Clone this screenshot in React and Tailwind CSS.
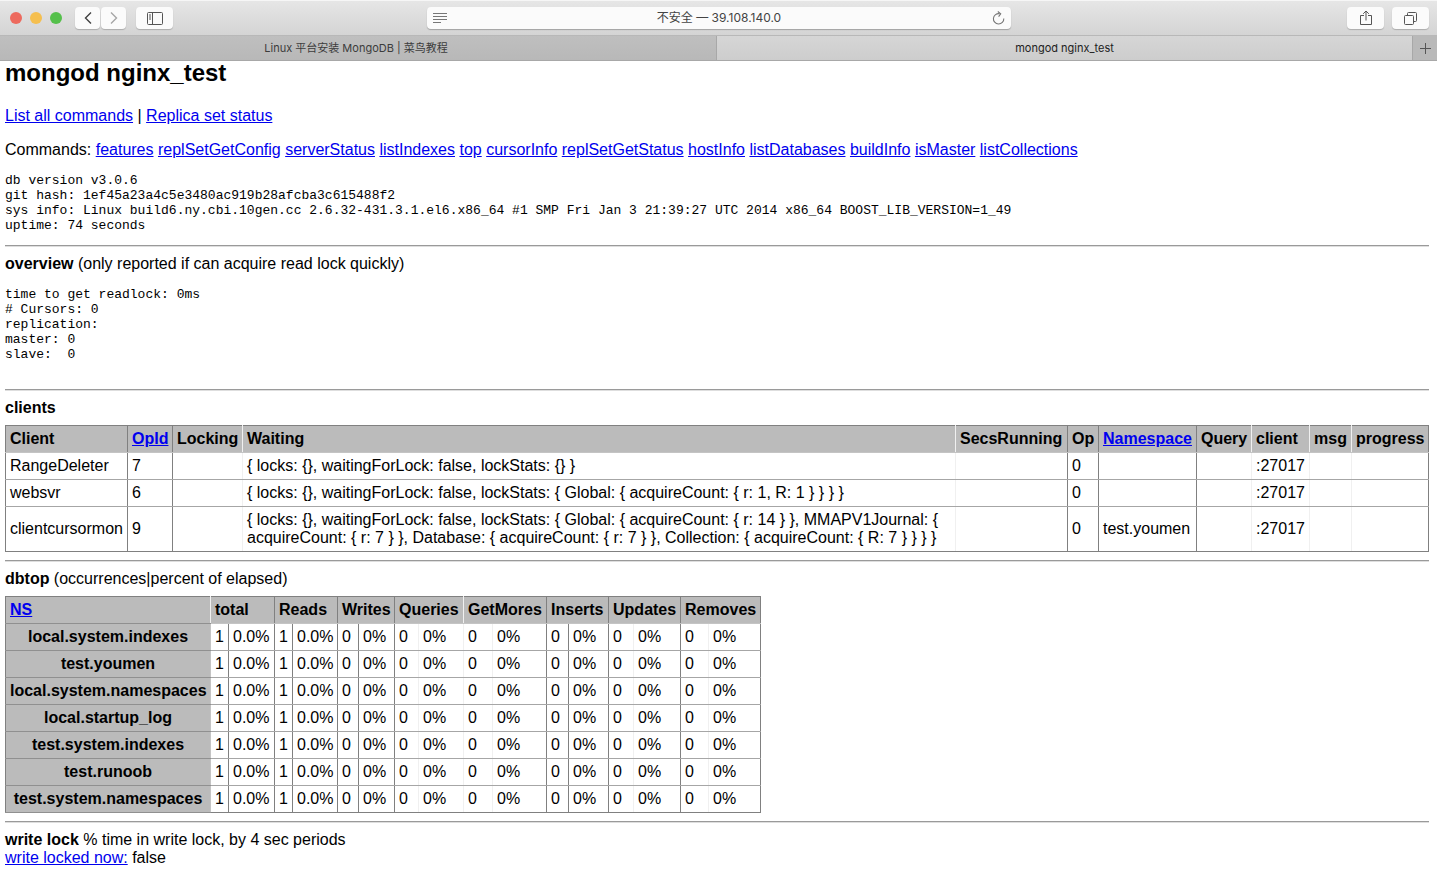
import React from "react";

const commands = [
  "features",
  "replSetGetConfig",
  "serverStatus",
  "listIndexes",
  "top",
  "cursorInfo",
  "replSetGetStatus",
  "hostInfo",
  "listDatabases",
  "buildInfo",
  "isMaster",
  "listCollections",
];

const serverInfo = `db version v3.0.6
git hash: 1ef45a23a4c5e3480ac919b28afcba3c615488f2
sys info: Linux build6.ny.cbi.10gen.cc 2.6.32-431.3.1.el6.x86_64 #1 SMP Fri Jan 3 21:39:27 UTC 2014 x86_64 BOOST_LIB_VERSION=1_49
uptime: 74 seconds`;

const overview = `time to get readlock: 0ms
# Cursors: 0
replication:
master: 0
slave:  0`;

const dark = "border-r-[#808080]";
const light = "border-r-[#f0f0f0]";

const clientColumns = [
  { name: "Client", width: "w-[122px]", edge: dark },
  { name: "OpId", width: "w-[45px]", edge: dark, link: true },
  { name: "Locking", width: "w-[70px]", edge: light },
  { name: "Waiting", width: "w-auto", edge: light },
  { name: "SecsRunning", width: "w-[112px]", edge: dark },
  { name: "Op", width: "w-[31px]", edge: dark },
  { name: "Namespace", width: "w-[98px]", edge: dark, link: true },
  { name: "Query", width: "w-[55px]", edge: light },
  { name: "client", width: "w-[58px]", edge: light },
  { name: "msg", width: "w-[42px]", edge: light },
  { name: "progress", width: "w-[77px]", edge: dark },
];

const clients = [
  ["RangeDeleter", "7", "", "{ locks: {}, waitingForLock: false, lockStats: {} }", "", "0", "", "", ":27017", "", ""],
  ["websvr", "6", "", "{ locks: {}, waitingForLock: false, lockStats: { Global: { acquireCount: { r: 1, R: 1 } } } }", "", "0", "", "", ":27017", "", ""],
  ["clientcursormon", "9", "", "{ locks: {}, waitingForLock: false, lockStats: { Global: { acquireCount: { r: 14 } }, MMAPV1Journal: { acquireCount: { r: 7 } }, Database: { acquireCount: { r: 7 } }, Collection: { acquireCount: { R: 7 } } } }", "", "0", "test.youmen", "", ":27017", "", ""],
];

const topGroups = [
  { name: "total", count: "w-[18px]", percent: "w-[46px]", inner: dark, edge: dark, values: ["1", "0.0%"] },
  { name: "Reads", count: "w-[18px]", percent: "w-[45px]", inner: dark, edge: dark, values: ["1", "0.0%"] },
  { name: "Writes", count: "w-[21px]", percent: "w-[36px]", inner: dark, edge: dark, values: ["0", "0%"] },
  { name: "Queries", count: "w-[24px]", percent: "w-[45px]", inner: light, edge: light, values: ["0", "0%"] },
  { name: "GetMores", count: "w-[29px]", percent: "w-[54px]", inner: light, edge: dark, values: ["0", "0%"] },
  { name: "Inserts", count: "w-[22px]", percent: "w-[40px]", inner: dark, edge: dark, values: ["0", "0%"] },
  { name: "Updates", count: "w-[25px]", percent: "w-[47px]", inner: light, edge: dark, values: ["0", "0%"] },
  { name: "Removes", count: "w-[28px]", percent: "w-[52px]", inner: light, edge: dark, values: ["0", "0%"] },
];

const namespaces = [
  "local.system.indexes",
  "test.youmen",
  "local.system.namespaces",
  "local.startup_log",
  "test.system.indexes",
  "test.runoob",
  "test.system.namespaces",
];

function Link({ children }) {
  return (
    <a href="#" className="text-[#0000ee] underline">
      {children}
    </a>
  );
}

function Rule() {
  return <hr className="my-2 h-[2px] border-t border-b border-t-[#9a9a9a] border-b-[#dedede]" />;
}

function ToolButton({ label, className, children }) {
  return (
    <button
      type="button"
      aria-label={label}
      className={`flex h-[22px] items-center justify-center rounded bg-[#fbfbfb] shadow-[0_1px_1px_rgba(0,0,0,0.2)] ${className}`}
    >
      {children}
    </button>
  );
}

function Toolbar() {
  return (
    <div className="grid h-[35px] grid-cols-[1fr_584px_1fr] items-center border-t border-[#f6f6f6] bg-linear-to-b from-[#e6e6e6] to-[#d4d4d4]">
      <div className="flex items-center pl-[10px]">
        <div className="flex gap-2">
          <span className="size-3 rounded-full bg-[#ed6a5e]" />
          <span className="size-3 rounded-full bg-[#f5bf4f]" />
          <span className="size-3 rounded-full bg-[#55c04b]" />
        </div>
        <div className="ml-[13px] flex gap-px">
          <ToolButton label="Back" className="w-[25px]">
            <svg width="8" height="14" viewBox="0 0 8 14" fill="none" stroke="#404040" strokeWidth="1.4">
              <path d="M7 1.5 1.5 7 7 12.5" />
            </svg>
          </ToolButton>
          <ToolButton label="Forward" className="w-[25px]">
            <svg width="8" height="14" viewBox="0 0 8 14" fill="none" stroke="#a6a6a6" strokeWidth="1.4">
              <path d="M1 1.5 6.5 7 1 12.5" />
            </svg>
          </ToolButton>
        </div>
        <ToolButton label="Show sidebar" className="ml-[10px] w-[37px]">
          <svg width="16" height="13" viewBox="0 0 16 13" fill="none" stroke="#555" strokeWidth="1">
            <rect x="0.5" y="0.5" width="15" height="12" rx="1" />
            <path d="M5.5 .5v12M2 3h2M2 5h2M2 7h2" />
          </svg>
        </ToolButton>
      </div>
      <div className="flex h-[22px] items-center rounded bg-[#fbfbfb] px-[6px] shadow-[0_1px_1px_rgba(0,0,0,0.25)]">
        <svg width="14" height="11" viewBox="0 0 14 11" stroke="#777" strokeWidth="1">
          <path d="M0 .5h14M0 3.5h14M0 6.5h14M0 9.5h8" />
        </svg>
        <input
          type="text"
          aria-label="Address"
          defaultValue="不安全 — 39.108.140.0"
          className="min-w-0 flex-1 bg-transparent text-center font-[Inter,'Noto_Sans_CJK_SC',sans-serif] text-[12px] leading-4 text-[#444] outline-none"
        />
        <button type="button" aria-label="Reload">
          <svg width="13" height="14" viewBox="0 0 13 14" fill="none" stroke="#777" strokeWidth="1.1">
            <path d="M7.600 2.700A5.200 5.200 0 1 0 11.800 7.500" />
            <path d="M5.800 .5 8.700 2.800 6.600 5.600" />
          </svg>
        </button>
      </div>
      <div className="flex justify-end gap-2 pr-2">
        <ToolButton label="Share" className="w-[37px]">
          <svg width="12" height="16" viewBox="0 0 12 16" fill="none" stroke="#555" strokeWidth="1">
            <path d="M4 5.5H.5v9h11v-9H8M6 10.5V1M3.2 3.8 6 1l2.8 2.8" />
          </svg>
        </ToolButton>
        <ToolButton label="Show all tabs" className="w-[37px]">
          <svg width="13" height="13" viewBox="0 0 13 13" fill="none" stroke="#555" strokeWidth="1">
            <rect x="0.5" y="3.5" width="9" height="9" rx="1" />
            <path d="M3.5 3.5V1.500a1 1 0 0 1 1-1h7a1 1 0 0 1 1 1v7a1 1 0 0 1-1 1H9.500" />
          </svg>
        </ToolButton>
      </div>
    </div>
  );
}

function TabBar() {
  return (
    <div className="flex h-[26px] border-t border-b border-t-[#b8b8b8] border-b-[#a8a8a8] font-[Inter,'Noto_Sans_CJK_SC',sans-serif] text-[11px] leading-4">
      <button type="button" className="w-[717px] shrink border-r border-[#a8a8a8] bg-linear-to-b from-[#bfbfbf] to-[#b8b8b8] pr-1 text-[#3c3c3c]">
        Linux 平台安装 MongoDB | 菜鸟教程
      </button>
      <button type="button" className="flex-1 bg-linear-to-b from-[#d6d6d6] to-[#cdcdcd] text-[#222]">
        mongod nginx_test
      </button>
      <button type="button" aria-label="New tab" className="flex w-[25px] items-center justify-center border-l border-[#a8a8a8] bg-[#b9b9b9]">
        <svg width="11" height="11" viewBox="0 0 11 11" stroke="#555" strokeWidth="1">
          <path d="M5.5 0v11M0 5.5h11" />
        </svg>
      </button>
    </div>
  );
}

function ClientsTable() {
  return (
    <table className="w-full table-fixed border-collapse border border-[#808080]">
      <colgroup>
        {clientColumns.map((col) => (
          <col key={col.name} className={col.width} />
        ))}
      </colgroup>
      <thead>
        <tr className="bg-[#bbbbbb] text-left">
          {clientColumns.map((col) => (
            <th key={col.name} className={`border-r border-b border-b-[#c4c4c4] p-1 whitespace-nowrap ${col.edge}`}>
              {col.link ? <Link>{col.name}</Link> : col.name}
            </th>
          ))}
        </tr>
      </thead>
      <tbody>
        {clients.map((row, r) => (
          <tr key={row[0]}>
            {row.map((cell, i) => (
              <td
                key={i}
                className={`border-r border-b p-1 ${clientColumns[i].edge} ${r === clients.length - 1 ? "border-b-[#808080]" : "border-b-[#a6a6a6]"}`}
              >
                {cell}
              </td>
            ))}
          </tr>
        ))}
      </tbody>
    </table>
  );
}

function TopTable() {
  return (
    <table className="w-[756px] table-fixed border-collapse border border-[#808080]">
      <colgroup>
        <col className="w-[205px]" />
        {topGroups.map((g) => (
          <React.Fragment key={g.name}>
            <col className={g.count} />
            <col className={g.percent} />
          </React.Fragment>
        ))}
      </colgroup>
      <thead>
        <tr className="bg-[#bbbbbb] text-left">
          <th className="border-r border-b border-r-[#f0f0f0] border-b-[#909090] p-1">
            <Link>NS</Link>
          </th>
          {topGroups.map((g) => (
            <th key={g.name} colSpan={2} className={`border-r border-b border-b-[#c4c4c4] p-1 ${g.edge}`}>
              {g.name}
            </th>
          ))}
        </tr>
      </thead>
      <tbody>
        {namespaces.map((ns, r) => {
          const bottom = r === namespaces.length - 1 ? "border-b-[#808080]" : "border-b-[#a6a6a6]";
          return (
            <tr key={ns}>
              <th className="border-r border-b border-r-[#c4c4c4] border-b-[#909090] bg-[#bbbbbb] p-1 text-center whitespace-nowrap">
                {ns}
              </th>
              {topGroups.map((g) => (
                <React.Fragment key={g.name}>
                  <td className={`border-r border-b p-1 ${g.inner} ${bottom}`}>{g.values[0]}</td>
                  <td className={`border-r border-b p-1 ${g.edge} ${bottom}`}>{g.values[1]}</td>
                </React.Fragment>
              ))}
            </tr>
          );
        })}
      </tbody>
    </table>
  );
}

export default function App() {
  return (
    <div className="min-h-screen bg-white">
      <Toolbar />
      <TabBar />
      <main className="pr-2 pb-2 pl-[5px] font-['Liberation_Sans',Arial,sans-serif] text-[16px] leading-[18px] text-black">
        <h2 className="text-[24px] leading-6 font-bold">mongod nginx_test</h2>

        <p className="mt-[22px]">
          <Link>List all commands</Link> | <Link>Replica set status</Link>
        </p>

        <p className="mt-4">
          Commands:{" "}
          {commands.map((cmd) => (
            <React.Fragment key={cmd}>
              <Link>{cmd}</Link>{" "}
            </React.Fragment>
          ))}
        </p>

        <pre className="mt-[14px] mb-3 font-['Liberation_Mono',monospace] text-[13px] leading-[15px]">{serverInfo}</pre>

        <Rule />
        <p>
          <b>overview</b> (only reported if can acquire read lock quickly)
        </p>
        <pre className="mt-[14px] mb-[27px] font-['Liberation_Mono',monospace] text-[13px] leading-[15px]">{overview}</pre>

        <Rule />
        <p className="mb-2">
          <b>clients</b>
        </p>
        <ClientsTable />

        <Rule />
        <p className="mb-2">
          <b>dbtop</b> (occurrences|percent of elapsed)
        </p>
        <TopTable />

        <Rule />
        <p>
          <b>write lock</b> % time in write lock, by 4 sec periods
        </p>
        <p>
          <Link>write locked now:</Link> false
        </p>
      </main>
    </div>
  );
}
